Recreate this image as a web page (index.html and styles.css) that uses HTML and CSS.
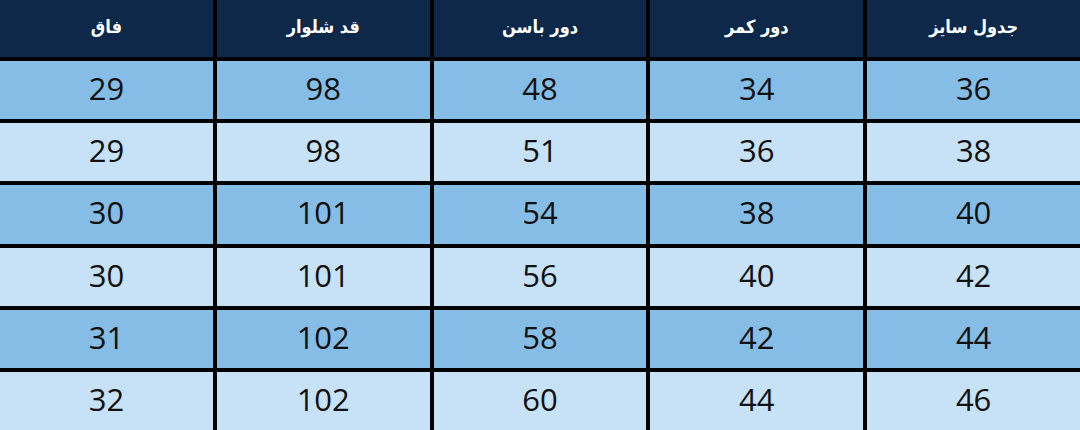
FILE: index.html
```html
<!DOCTYPE html>
<html lang="fa" dir="rtl">
<head>
<meta charset="utf-8">
<link rel="stylesheet" href="styles.css">
</head>
<body>
<div class="table">
  <div class="cell head">جدول سایز</div>
  <div class="cell head">دور کمر</div>
  <div class="cell head">دور باسن</div>
  <div class="cell head">قد شلوار</div>
  <div class="cell head">فاق</div>

  <div class="cell dark">36</div><div class="cell dark">34</div><div class="cell dark">48</div><div class="cell dark">98</div><div class="cell dark">29</div>
  <div class="cell light">38</div><div class="cell light">36</div><div class="cell light">51</div><div class="cell light">98</div><div class="cell light">29</div>
  <div class="cell dark">40</div><div class="cell dark">38</div><div class="cell dark">54</div><div class="cell dark">101</div><div class="cell dark">30</div>
  <div class="cell light">42</div><div class="cell light">40</div><div class="cell light">56</div><div class="cell light">101</div><div class="cell light">30</div>
  <div class="cell dark">44</div><div class="cell dark">42</div><div class="cell dark">58</div><div class="cell dark">102</div><div class="cell dark">31</div>
  <div class="cell light">46</div><div class="cell light">44</div><div class="cell light">60</div><div class="cell light">102</div><div class="cell light">32</div>
</div>
</body>
</html>
```
FILE: styles.css
```css
html, body {
  margin: 0;
  padding: 0;
  background: #000;
}
.table {
  width: 1080px;
  height: 430px;
  display: grid;
  grid-template-columns: repeat(5, 1fr);
  grid-template-rows: 57px repeat(6, 1fr);
  column-gap: 4px;
  row-gap: 4px;
  background: #000;
  overflow: hidden;
}
.cell {
  display: flex;
  align-items: center;
  justify-content: center;
  font-family: "Open Sans", "Liberation Sans", sans-serif;
  font-size: 31px;
  color: #111;
  padding-bottom: 4px;
  box-sizing: border-box;
}
.head {
  background: #0e284a;
  color: #fff;
  font-family: "DejaVu Sans Condensed", "DejaVu Sans", sans-serif;
  font-weight: bold;
  font-size: 18px;
  padding-bottom: 4px;
}
.dark {
  background: #86bde6;
}
.light {
  background: #c7e1f6;
}
```
